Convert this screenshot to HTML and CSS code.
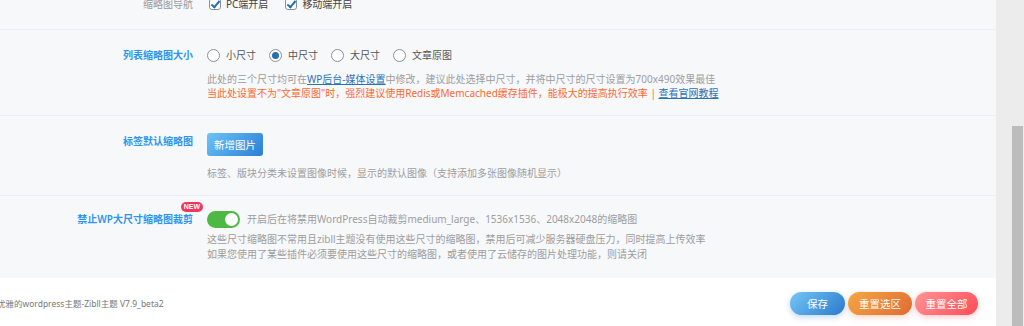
FILE: index.html
```html
<!DOCTYPE html>
<html lang="zh-CN">
<head>
    <meta charset="UTF-8">
    <meta name="viewport" content="width=device-width, initial-scale=1.0">
    <title>Zibll 主题设置</title>
    <link rel="stylesheet" href="styles.css">
</head>
<body>

    <div class="page">
        <div class="main">
            <div class="options">

                <div class="row row-first">
                    <div class="label muted">缩略图导航</div>
                    <div class="field">
                        <div class="choices">
                            <label class="choice"><span class="check"></span>PC端开启</label>
                            <label class="choice"><span class="check"></span>移动端开启</label>
                        </div>
                    </div>
                </div>

                <div class="row">
                    <div class="label">列表缩略图大小</div>
                    <div class="field">
                        <div class="choices">
                            <label class="choice"><span class="radio"></span>小尺寸</label>
                            <label class="choice"><span class="radio on"></span>中尺寸</label>
                            <label class="choice"><span class="radio"></span>大尺寸</label>
                            <label class="choice"><span class="radio"></span>文章原图</label>
                        </div>
                        <div class="desc">
                            此处的三个尺寸均可在<a href="#">WP后台-媒体设置</a>中修改，建议此处选择中尺寸，并将中尺寸的尺寸设置为700x490效果最佳<br>
                            <span class="warn">当此处设置不为"文章原图"时，强烈建议使用Redis或Memcached缓存插件，能极大的提高执行效率 | </span><a href="#">查看官网教程</a>
                        </div>
                    </div>
                </div>

                <div class="row">
                    <div class="label">标签默认缩略图</div>
                    <div class="field">
                        <button class="add-btn">新增图片</button>
                        <div class="desc">标签、版块分类未设置图像时候，显示的默认图像（支持添加多张图像随机显示）</div>
                    </div>
                </div>

                <div class="row row-last">
                    <div class="label"><span class="has-badge">禁止WP大尺寸缩略图裁剪<span class="badge">NEW</span></span></div>
                    <div class="field">
                        <div class="switch-line">
                            <span class="switch"><span class="knob"></span></span>
                            <span class="switch-text">开启后在将禁用WordPress自动裁剪medium_large、1536x1536、2048x2048的缩略图</span>
                        </div>
                        <div class="desc desc-tall">
                            这些尺寸缩略图不常用且zibll主题没有使用这些尺寸的缩略图，禁用后可减少服务器硬盘压力，同时提高上传效率<br>
                            如果您使用了某些插件必须要使用这些尺寸的缩略图，或者使用了云储存的图片处理功能，则请关闭
                        </div>
                    </div>
                </div>

            </div>

            <div class="footer">
                <div class="version">优雅的wordpress主题-Zibll主题 V7.9_beta2</div>
                <div class="actions">
                    <button class="pill pill-blue">保存</button>
                    <button class="pill pill-orange">重置选区</button>
                    <button class="pill pill-red">重置全部</button>
                </div>
            </div>
        </div>

        <div class="scroll-track">
            <div class="scroll-thumb"></div>
        </div>
    </div>

</body>
</html>
```

FILE: styles.css
```css
*{
    box-sizing: border-box;
}

body{
    margin: 0;
    height: 326px;
    overflow: hidden;
    font-family: "Noto Sans", "Noto Sans CJK SC", sans-serif;
    font-size: 10px;
    color: #555;
    background: #ececec;
}

.page{
    display: flex;
    height: 326px;
}

.main{
    width: 996px;
    display: flex;
    flex-direction: column;
}

.options{
    background: #f7f8fa;
}

.row{
    display: flex;
    padding: 17px 0 15px;
    border-bottom: 1px solid #eceef2;
}

.row-first{
    margin-top: -21px;
    padding-bottom: 17px;
}

.row-last{
    border-bottom: none;
    padding-top: 15px;
    padding-bottom: 16px;
}

.label{
    width: 193px;
    flex-shrink: 0;
    text-align: right;
    color: #2d95ef;
    font-weight: 600;
    line-height: 16px;
}

.label.muted{
    color: #9a9a9a;
    font-weight: 400;
}

.field{
    margin-left: 14px;
    flex: 1;
}

.choices{
    display: flex;
    gap: 13px;
    line-height: 16px;
}

.choice{
    display: flex;
    align-items: center;
    gap: 6px;
    color: #555;
}

.row-first .choice{
    gap: 5px;
    margin-left: 2px;
    margin-right: 2px;
    color: #444;
}

.check{
    width: 12px;
    height: 12px;
    border: 1px solid #8c8f94;
    border-radius: 3px;
    background: #fff;
    position: relative;
}

.check::after{
    content: '';
    position: absolute;
    left: 3px;
    top: 0px;
    width: 3px;
    height: 7px;
    border: solid #2271b1;
    border-width: 0 2px 2px 0;
    transform: rotate(40deg);
}

.radio{
    width: 13px;
    height: 13px;
    border: 1px solid #8c8f94;
    border-radius: 50%;
    background: #fff;
    display: flex;
    align-items: center;
    justify-content: center;
}

.radio.on::after{
    content: '';
    width: 7px;
    height: 7px;
    border-radius: 50%;
    background: #2271b1;
}

.desc{
    margin-top: 9px;
    color: #9d9d9d;
    line-height: 14px;
}

.desc-tall{
    margin-top: 4px;
    line-height: 15px;
}

.desc a{
    color: #2a72b8;
    text-decoration: underline;
}

.warn{
    color: #fc6a2e;
}

.add-btn{
    display: block;
    width: 56px;
    height: 23px;
    border: none;
    border-radius: 3px;
    background: linear-gradient(135deg, #6cc4f8, #2a7fd4);
    color: #fff;
    font-family: inherit;
    font-size: 10.5px;
    padding: 0;
}

.row .add-btn + .desc{
    margin-top: 10px;
}

.has-badge{
    position: relative;
}

.badge{
    position: absolute;
    right: -10px;
    top: -10px;
    height: 10px;
    padding: 0 3px;
    border-radius: 6px;
    background: #f5365c;
    color: #fff;
    font-size: 7px;
    font-weight: 600;
    line-height: 10px;
    font-family: "Liberation Sans", sans-serif;
}

.switch-line{
    display: flex;
    align-items: center;
    gap: 7px;
    line-height: 17px;
}

.switch{
    width: 33px;
    height: 17px;
    border-radius: 9px;
    background: #4cb944;
    display: flex;
    align-items: center;
    justify-content: flex-end;
    padding-right: 2px;
}

.knob{
    width: 13px;
    height: 13px;
    border-radius: 50%;
    background: #fff;
}

.switch-text{
    color: #9d9d9d;
}

.footer{
    flex: 1;
    background: #fff;
    display: flex;
    align-items: center;
    justify-content: space-between;
    padding: 0 18px 0 0;
    overflow: hidden;
}

.version{
    margin-left: -3px;
    color: #777;
    font-size: 8.5px;
    white-space: nowrap;
    margin-top: 1px;
}

.actions{
    display: flex;
    gap: 3px;
    margin-top: 2px;
}

.pill{
    height: 23px;
    border: none;
    border-radius: 12px;
    color: #fff;
    font-family: inherit;
    font-size: 10.5px;
    padding: 0;
}

.pill-blue{
    width: 55px;
    background: linear-gradient(135deg, #74c6f6, #2a7acc);
    box-shadow: 0 2px 6px rgba(42, 122, 204, 0.3);
}

.pill-orange{
    width: 64px;
    background: linear-gradient(135deg, #f5a742, #e06a35);
    box-shadow: 0 2px 6px rgba(224, 106, 53, 0.3);
}

.pill-red{
    width: 63px;
    background: linear-gradient(135deg, #ff9595, #ff4b57);
    box-shadow: 0 2px 6px rgba(255, 75, 87, 0.3);
}

.scroll-track{
    flex: 1;
    padding: 126px 1px 0 16px;
    background: #ececec;
}

.scroll-thumb{
    height: 200px;
    background: #bcbcbc;
}
```
